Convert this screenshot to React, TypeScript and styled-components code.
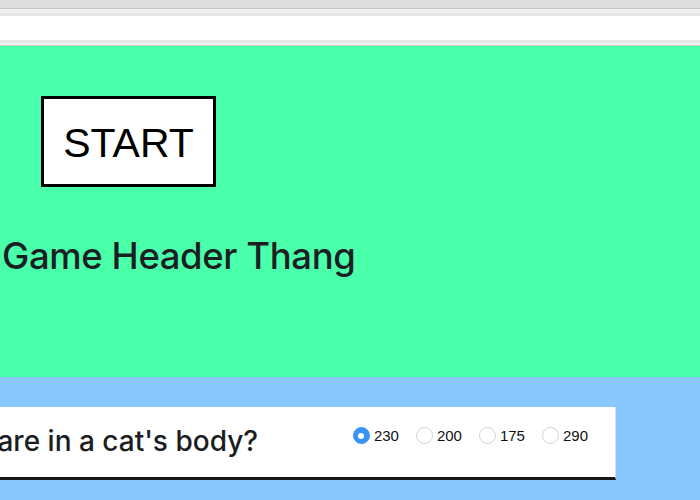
import React from "react";
import styled, { createGlobalStyle } from "styled-components";

const Global = createGlobalStyle`
  html, body { margin: 0; padding: 0; background: #88c8ff; overflow: hidden; }
  body { font-family: Inter, "Liberation Sans", Arial, sans-serif; }
`;

const Chrome = styled.div`
  display: flex;
  flex-direction: column;
`;

const Band = styled.div<{ $h: number; $c: string }>`
  height: ${(p) => p.$h}px;
  background: ${(p) => p.$c};
`;

const Header = styled.header`
  background: #4affaa;
  height: 331px;
  display: flex;
  flex-direction: column;
  align-items: flex-start;
  padding-top: 50px;
  box-sizing: border-box;
`;

const StartButton = styled.button`
  margin-left: 41px;
  width: 175px;
  height: 91px;
  border: 3px solid #000;
  background: #fff;
  font-family: "Liberation Sans", Arial, sans-serif;
  font-size: 41px;
  color: #000;
  padding: 4px 0 0;
  cursor: pointer;
`;

const Title = styled.h1`
  margin: 47px 0 0 2px;
  font-family: Inter, "Liberation Sans", sans-serif;
  font-weight: 450;
  font-size: 36.5px;
  color: #1b1f24;
  letter-spacing: -0.4px;
`;

const Body = styled.main`
  background: #88c8ff;
  padding-top: 30px;
  height: 123px;
  box-sizing: border-box;
  overflow: hidden;
`;

const Card = styled.div`
  width: 616px;
  height: 73px;
  box-sizing: border-box;
  background: #fff;
  border-right: 1px solid #c9e3ff;
  border-bottom: 3px solid #15171a;
  display: flex;
  align-items: flex-start;
  justify-content: space-between;
  overflow: hidden;
`;

const QuestionClip = styled.div`
  display: flex;
  justify-content: flex-end;
  width: 258px;
  overflow: hidden;
  flex-shrink: 0;
`;

const Question = styled.p`
  margin: 17px 0 0;
  white-space: nowrap;
  font-family: Inter, "Liberation Sans", sans-serif;
  font-weight: 450;
  font-size: 28px;
  color: #1b1d21;
  flex-shrink: 0;
`;

const Options = styled.div`
  display: flex;
  gap: 17px;
  margin: 20px 27px 0 0;
`;

const Option = styled.label`
  display: flex;
  align-items: center;
  gap: 4px;
  font-family: "Liberation Sans", Arial, sans-serif;
  font-size: 15px;
  color: #111;
`;

const Radio = styled.span<{ $on?: boolean }>`
  width: 17px;
  height: 17px;
  border-radius: 50%;
  box-sizing: border-box;
  background: ${(p) => (p.$on ? "#3a95f8" : "#fff")};
  border: 1px solid ${(p) => (p.$on ? "#3a95f8" : "#d2d2d2")};
  display: flex;
  align-items: center;
  justify-content: center;
  &::after {
    content: "";
    display: ${(p) => (p.$on ? "block" : "none")};
    width: 6px;
    height: 6px;
    border-radius: 50%;
    background: #fff;
  }
`;

const answers = ["230", "200", "175", "290"];

export default function App() {
  return (
    <>
      <Global />
      <Chrome>
        <Band $h={8} $c="#dddddd" />
        <Band $h={1} $c="#c9c9c9" />
        <Band $h={4} $c="#f1f1f1" />
        <Band $h={3} $c="#e6e6e6" />
        <Band $h={24} $c="#ffffff" />
        <Band $h={3} $c="#e6e6e6" />
        <Band $h={2} $c="#f1f1f1" />
        <Band $h={1} $c="#cdcdcd" />
      </Chrome>
      <Header>
        <StartButton>START</StartButton>
        <Title>Game Header Thang</Title>
      </Header>
      <Body>
        <Card>
          <QuestionClip>
            <Question>How many bones are in a cat's body?</Question>
          </QuestionClip>
          <Options>
            {answers.map((a, i) => (
              <Option key={a}>
                <Radio $on={i === 0} />
                {a}
              </Option>
            ))}
          </Options>
        </Card>
      </Body>
    </>
  );
}
